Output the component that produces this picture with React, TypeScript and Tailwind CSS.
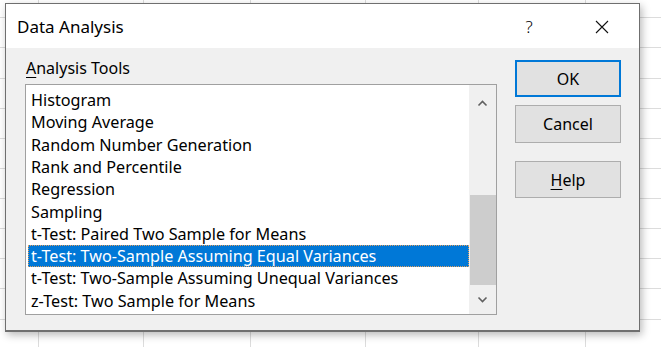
import React from "react";

const items = [
  "Histogram",
  "Moving Average",
  "Random Number Generation",
  "Rank and Percentile",
  "Regression",
  "Sampling",
  "t-Test: Paired Two Sample for Means",
  "t-Test: Two-Sample Assuming Equal Variances",
  "t-Test: Two-Sample Assuming Unequal Variances",
  "z-Test: Two Sample for Means",
];

const vLines = [38, 143, 250, 365, 478, 585];
const hLines = [17, 47, 78, 108, 138, 168, 198, 228, 258, 288, 319];

export default function App() {
  return (
    <div
      className="relative w-[661px] h-[347px] bg-white overflow-hidden"
      style={{ fontFamily: '"Noto Sans", "Open Sans", sans-serif' }}
    >
      {vLines.map((x) => (
        <div key={"v" + x} className="absolute top-0 h-full w-px bg-[#dcdcdc]" style={{ left: x }} />
      ))}
      {hLines.map((y) => (
        <div key={"h" + y} className="absolute left-0 w-full h-px bg-[#dcdcdc]" style={{ top: y }} />
      ))}

      <div className="absolute left-[5px] top-[3px] w-[635px] h-[329px] border border-[#6f6f6f] border-b-2 bg-[#f0f0f0] shadow-[2px_3px_8px_rgba(0,0,0,0.28)] flex flex-col">
        {/* Title bar */}
        <div className="h-[44px] bg-white flex items-center pl-[11px] pr-[30px] text-[#000]">
          <div className="text-[17px] leading-none flex-1 pt-[1px]">Data Analysis</div>
          <div className="text-[17px] leading-none w-[20px] text-center mr-[56px] font-light pt-[1px]">?</div>
          <svg width="14" height="14" viewBox="0 0 14 14" className="mt-[1px]">
            <path d="M1 1 L13 13 M13 1 L1 13" stroke="#111" strokeWidth="1.1" />
          </svg>
        </div>

        {/* Body */}
        <div className="flex-1 flex pl-[19px] pt-[11px]">
          <div className="flex flex-col">
            <div className="text-[16px] leading-[18px] text-[#000] pl-[1px] h-[25px]">
              <span className="underline underline-offset-[3px] decoration-1">A</span>nalysis Tools
            </div>
            <div className="w-[472px] h-[231px] border border-[#a0a0a0] bg-white flex">
              <div className="flex-1 pt-[4px] pl-[2px] flex flex-col">
                {items.map((it, i) => {
                  const sel = i === 7;
                  return (
                    <div
                      key={it}
                      className={
                        "h-[22.3px] flex items-center pl-[3px] text-[16.2px] leading-none whitespace-nowrap " +
                        (sel
                          ? "bg-[#0078d7] text-white outline outline-1 outline-dotted outline-[#e0a060] -outline-offset-1"
                          : "text-[#000]")
                      }
                    >
                      {it}
                    </div>
                  );
                })}
              </div>
              <div className="w-[27px] bg-[#f0f0f0] flex flex-col items-center">
                <div className="h-[36px] w-full flex items-center justify-center">
                  <svg width="11" height="7" viewBox="0 0 11 7">
                    <path d="M1.5 5.5 L5.5 1.5 L9.5 5.5" stroke="#606060" strokeWidth="1.6" fill="none" />
                  </svg>
                </div>
                <div className="h-[74px]" />
                <div className="w-[26px] h-[90px] bg-[#cdcdcd]" />
                <div className="flex-1 w-full flex items-center justify-center">
                  <svg width="11" height="7" viewBox="0 0 11 7">
                    <path d="M1.5 1.5 L5.5 5.5 L9.5 1.5" stroke="#606060" strokeWidth="1.6" fill="none" />
                  </svg>
                </div>
              </div>
            </div>
          </div>

          <div className="flex flex-col ml-[18px] pt-[1px] w-[106px] text-[16px] text-[#000]">
            <button className="h-[37px] w-full bg-[#e1e1e1] border-2 border-[#0078d7] flex items-center justify-center leading-none">
              OK
            </button>
            <button className="mt-[8px] h-[38px] w-full bg-[#e1e1e1] border border-[#adadad] flex items-center justify-center leading-none">
              Cancel
            </button>
            <button className="mt-[18px] h-[37px] w-full bg-[#e1e1e1] border border-[#adadad] flex items-center justify-center leading-none">
              <span className="underline underline-offset-[3px] decoration-1">H</span>elp
            </button>
          </div>
        </div>
      </div>
    </div>
  );
}
